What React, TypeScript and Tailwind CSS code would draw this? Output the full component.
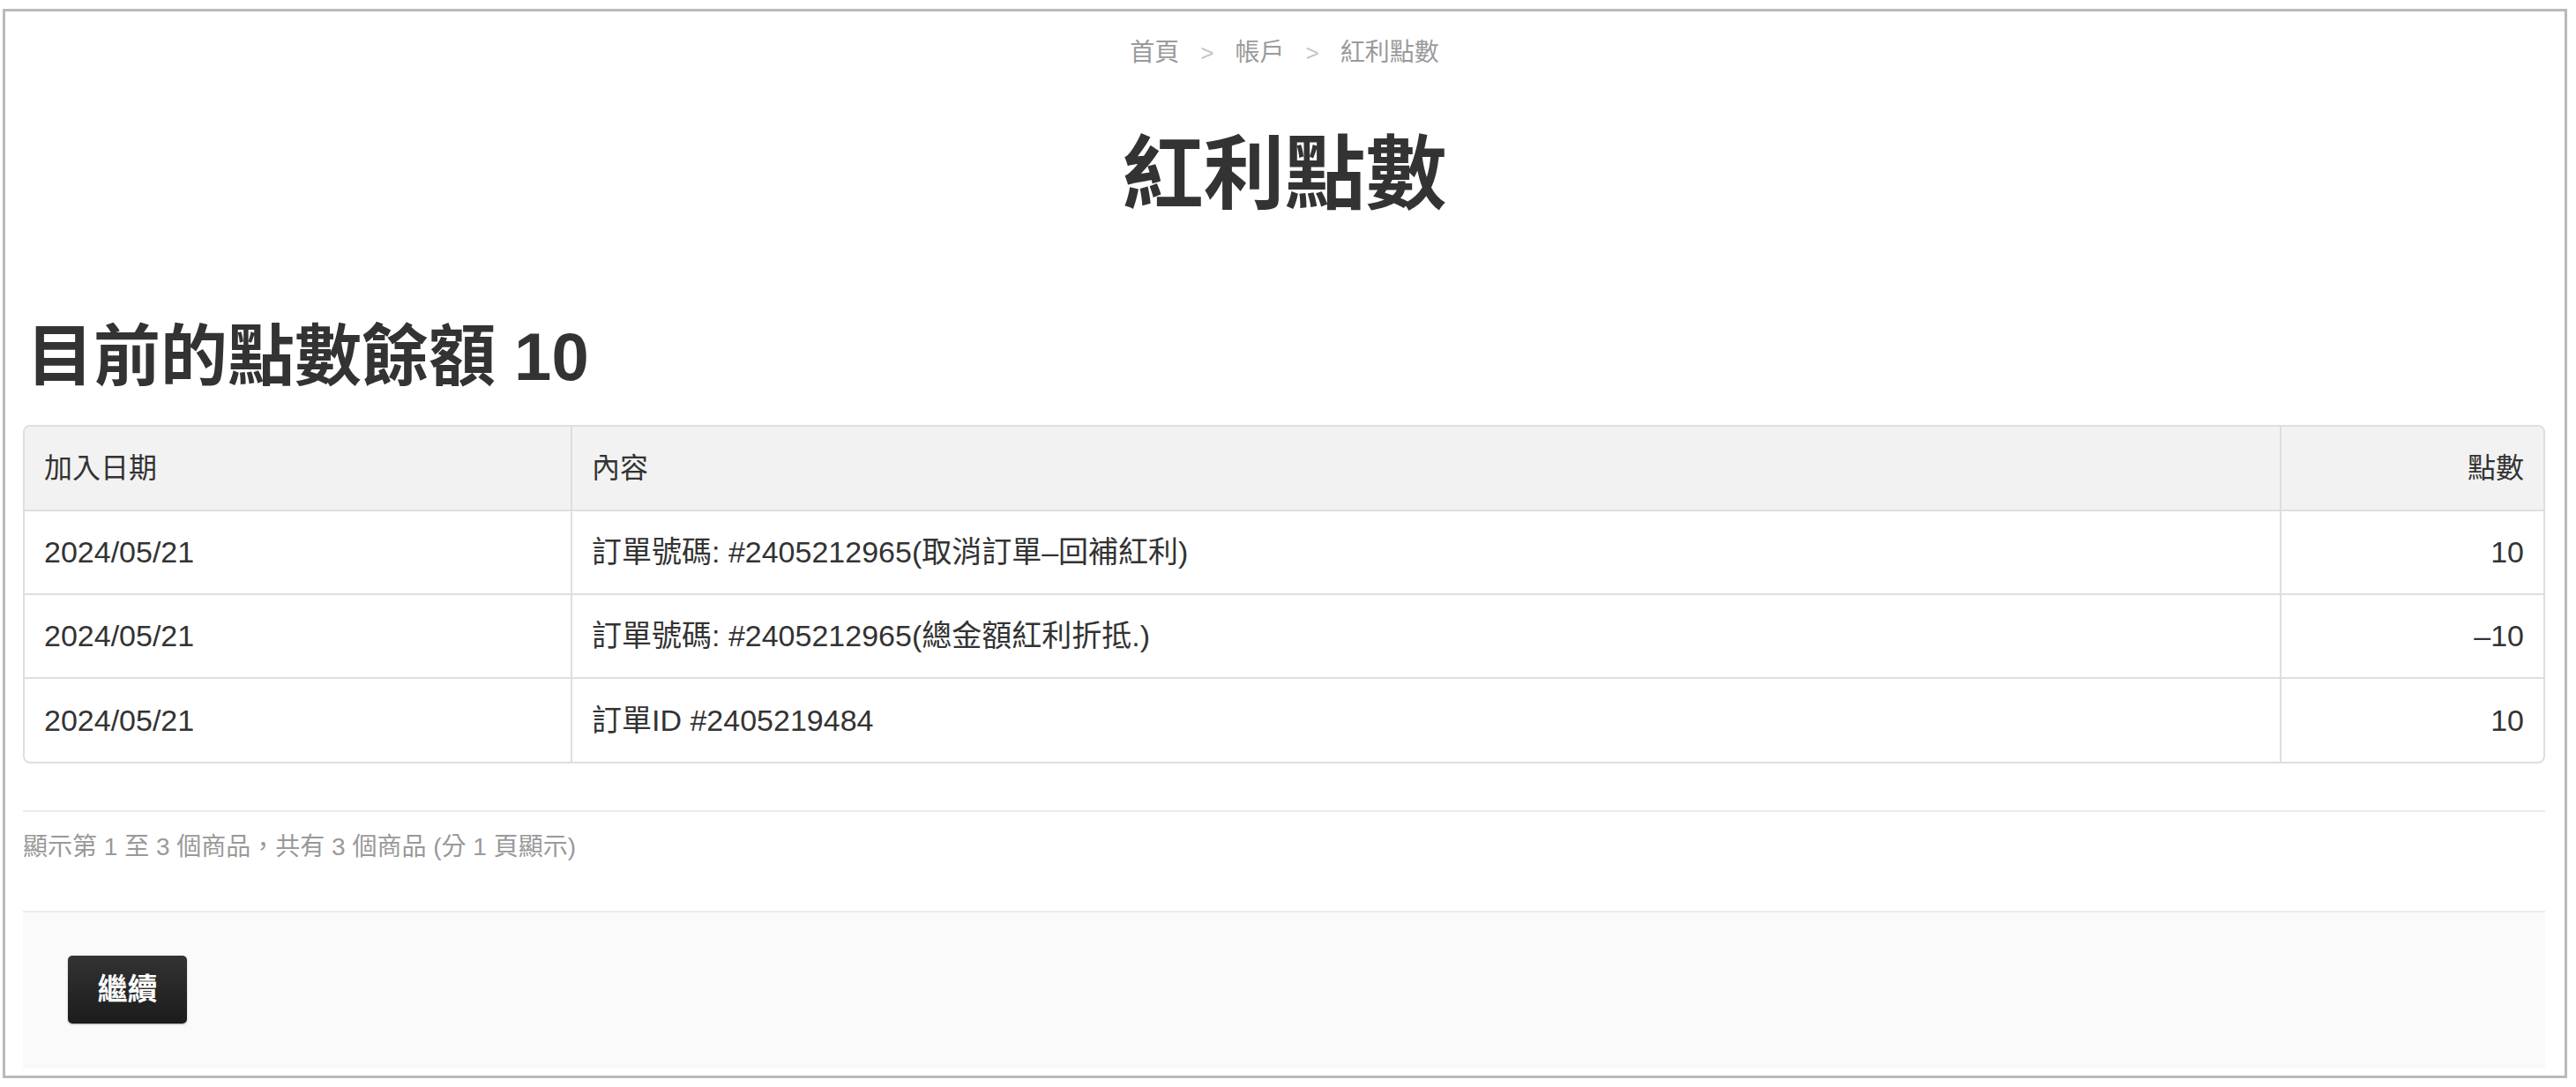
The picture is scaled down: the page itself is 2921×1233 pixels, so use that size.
import React from "react";

const FONT = { fontFamily: '"Liberation Sans", "Noto Sans CJK TC", sans-serif' };

const rows = [
  { date: "2024/05/21", content: "訂單號碼: #2405212965(取消訂單–回補紅利)", pts: "10" },
  { date: "2024/05/21", content: "訂單號碼: #2405212965(總金額紅利折抵.)", pts: "–10" },
  { date: "2024/05/21", content: "訂單ID #2405219484", pts: "10" },
];

export default function App() {
  return (
    <div className="w-[2921px] h-[1233px] bg-white overflow-hidden" style={FONT}>
      <div className="ml-[3px] mt-[10px] w-[2908px] h-[1213px] border-[3px] border-[#bababa] bg-white pl-[20px] pr-[21px] flex flex-col">
        {/* breadcrumb */}
        <div className="mt-[27px] h-[40px] flex items-center justify-center gap-[24px] text-[28px] leading-[40px] text-[#9a9a9a]">
          <span>首頁</span>
          <span className="text-[#c4c4c4] text-[26px]">&gt;</span>
          <span>帳戶</span>
          <span className="text-[#c4c4c4] text-[26px]">&gt;</span>
          <span>紅利點數</span>
        </div>

        {/* title */}
        <h1 className="mt-[63px] h-[110px] text-center text-[92px] leading-[110px] font-bold text-[#333333]">
          紅利點數
        </h1>

        {/* balance heading */}
        <h2 className="mt-[107px] h-[90px] text-[76px] leading-[90px] font-bold text-[#333333] pl-[4px]">
          目前的點數餘額 10
        </h2>

        {/* table */}
        <div className="mt-[32px] w-[2860px] border-2 border-[#dedede] rounded-[8px] overflow-hidden">
          <table className="w-full border-collapse text-[34px] text-[#333333]">
            <thead>
              <tr className="bg-[#f2f2f2] h-[95px]">
                <th className="w-[620px] text-left font-normal px-[22px] text-[32px]">加入日期</th>
                <th className="text-left font-normal px-[22px] border-l-2 border-[#dedede] text-[32px]">內容</th>
                <th className="w-[298px] text-right font-normal px-[22px] border-l-2 border-[#dedede] text-[32px]">點數</th>
              </tr>
            </thead>
            <tbody>
              {rows.map((r, i) => (
                <tr key={i} className="h-[95px] border-t-2 border-[#dedede]">
                  <td className="px-[22px]">{r.date}</td>
                  <td className="px-[22px] border-l-2 border-[#dedede]">{r.content}</td>
                  <td className="px-[22px] text-right border-l-2 border-[#dedede]">{r.pts}</td>
                </tr>
              ))}
            </tbody>
          </table>
        </div>

        {/* divider */}
        <div className="mt-[53px] w-[2860px] h-[2px] bg-[#ececec]" />

        {/* pagination info */}
        <div className="mt-[20px] h-[40px] text-[28px] leading-[40px] text-[#999999]">
          顯示第 1 至 3 個商品，共有 3 個商品 (分 1 頁顯示)
        </div>

        {/* button area */}
        <div className="mt-[52px] w-[2860px] h-[179px] border-t-2 border-[#ececec] bg-[#fafafa] pl-[51px] pt-[49px]">
          <button className="w-[135px] h-[77px] rounded-[5px] bg-gradient-to-b from-[#333333] to-[#1c1c1c] text-white text-[34px] font-bold flex items-center justify-center shadow-[0_1px_2px_rgba(0,0,0,0.3)]">
            繼續
          </button>
        </div>
      </div>
    </div>
  );
}
